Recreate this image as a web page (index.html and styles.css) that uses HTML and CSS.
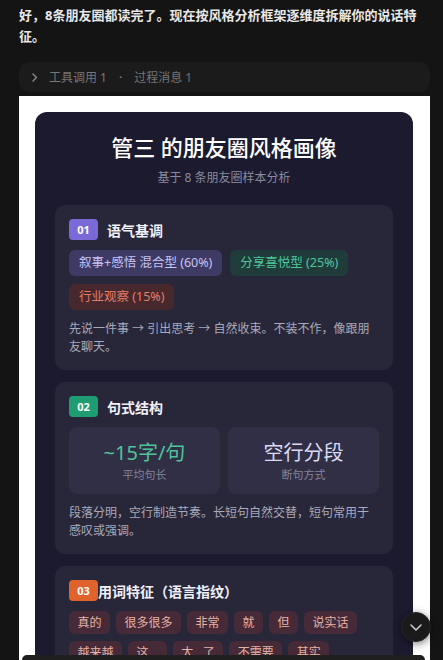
FILE: index.html
```html
<!DOCTYPE html>
<html lang="zh-CN">
<head>
<meta charset="utf-8">
<title>朋友圈风格画像</title>
<link rel="stylesheet" href="styles.css">
</head>
<body>
<div class="chat">
  <p class="intro">好，8条朋友圈都读完了。现在按风格分析框架逐维度拆解你的说话特征。</p>

  <div class="toolbar">
    <svg class="chev" width="6" height="9" viewBox="0 0 6 9"><path d="M1 1l3.5 3.5L1 8" fill="none" stroke="#8a8a8a" stroke-width="1.4" stroke-linecap="round" stroke-linejoin="round"/></svg>
    <span>工具调用 1</span>
    <span class="dot">·</span>
    <span>过程消息 1</span>
  </div>

  <div class="frame">
    <div class="card">
      <h1 class="title">管三 的朋友圈风格画像</h1>
      <p class="subtitle">基于 8 条朋友圈样本分析</p>

      <div class="sections">
        <section class="sec">
          <div class="sec-head">
            <span class="badge badge-purple">01</span>
            <span class="sec-title">语气基调</span>
          </div>
          <div class="tags">
            <span class="tag tag-purple">叙事+感悟 混合型 (60%)</span>
            <span class="tag tag-green">分享喜悦型 (25%)</span>
            <span class="tag tag-red">行业观察 (15%)</span>
          </div>
          <p class="desc">先说一件事 → 引出思考 → 自然收束。不装不作，像跟朋友聊天。</p>
        </section>

        <section class="sec">
          <div class="sec-head">
            <span class="badge badge-green">02</span>
            <span class="sec-title">句式结构</span>
          </div>
          <div class="stats">
            <div class="stat">
              <div class="stat-val stat-green">~15字/句</div>
              <div class="stat-label">平均句长</div>
            </div>
            <div class="stat">
              <div class="stat-val stat-light">空行分段</div>
              <div class="stat-label">断句方式</div>
            </div>
          </div>
          <p class="desc">段落分明，空行制造节奏。长短句自然交替，短句常用于感叹或强调。</p>
        </section>

        <section class="sec">
          <div class="sec-head sec-head-tight">
            <span class="badge badge-orange">03</span>
            <span class="sec-title">用词特征（语言指纹）</span>
          </div>
          <div class="words">
            <span class="word">真的</span>
            <span class="word">很多很多</span>
            <span class="word">非常</span>
            <span class="word">就</span>
            <span class="word">但</span>
            <span class="word">说实话</span>
            <span class="word">越来越</span>
            <span class="word">这...</span>
            <span class="word">太...了</span>
            <span class="word">不需要</span>
            <span class="word">其实</span>
          </div>
          <p class="desc">口语化表达多，常用程度副词加强语气。</p>
        </section>
      </div>
    </div>
  </div>
</div>

<button class="scroll-btn" aria-label="滚动到底部">
  <svg width="12" height="7" viewBox="0 0 12 7"><path d="M1 1l5 5 5-5" fill="none" stroke="#cfcfcf" stroke-width="1.5" stroke-linecap="round" stroke-linejoin="round"/></svg>
</button>
<div class="composer"></div>
</body>
</html>
```

FILE: styles.css
```css
* { box-sizing: border-box; }

html, body {
  margin: 0;
  padding: 0;
  background: #141414;
}

body {
  font-family: "Noto Sans", "Noto Sans CJK SC", sans-serif;
  color: #e6e6e6;
}

.chat {
  padding: 5px 13px 0 19px;
}

.intro {
  margin: 0;
  width: 402px;
  font-size: 13px;
  line-height: 21px;
  font-weight: 700;
  color: #e8e8e8;
}

.toolbar {
  margin-top: 15px;
  height: 30px;
  border-radius: 10px;
  background: #1b1b1b;
  display: flex;
  align-items: center;
  padding-left: 13px;
  font-size: 12px;
  color: #767676;
}

.toolbar .chev {
  margin-right: 11px;
}

.toolbar .dot {
  margin: 0 12px;
  color: #8a8a8a;
}

.frame {
  margin-top: 4px;
  background: #ffffff;
  padding: 16px 17px 16px 16px;
}

.card {
  background: #1c1a2e;
  border-radius: 12px;
  padding: 20px 20px 20px;
}

.title {
  margin: 0;
  text-align: center;
  font-size: 22px;
  line-height: 30px;
  font-weight: 500;
  color: #ffffff;
}

.subtitle {
  margin: 7px 0 0;
  text-align: center;
  font-size: 12px;
  line-height: 18px;
  color: #8b8a9e;
}

.sections {
  margin-top: 18px;
  display: flex;
  flex-direction: column;
  gap: 12px;
}

.sec {
  background: #28273a;
  border-radius: 10px;
  padding: 14px 14px 14px;
}

.sec-head {
  display: flex;
  align-items: center;
  gap: 9px;
  height: 21px;
}

.sec-head-tight { gap: 0; }

.badge {
  width: 29px;
  height: 21px;
  border-radius: 4px;
  display: flex;
  align-items: center;
  justify-content: center;
  font-size: 11px;
  font-weight: 700;
  color: #ffffff;
}

.badge-purple { background: #7a6ad8; }
.badge-green { background: #1f9d72; }
.badge-orange { background: #e0622c; }

.sec-title {
  font-size: 14px;
  font-weight: 700;
  color: #f1f0f7;
}

.tags {
  margin-top: 10px;
  display: flex;
  flex-wrap: wrap;
  gap: 8px;
}

.tag {
  height: 26px;
  line-height: 26px;
  padding: 0 10px;
  border-radius: 6px;
  font-size: 12.5px;
}

.tag-purple { background: #3d3a64; color: #c9c4f4; }
.tag-green { background: #1f3c3b; color: #4fc79a; }
.tag-red { background: #47292d; color: #e67c69; }

.desc {
  margin: 10px 0 0;
  font-size: 12px;
  line-height: 18px;
  color: #aaa9b9;
}

.stats {
  margin-top: 10px;
  display: grid;
  grid-template-columns: 1fr 1fr;
  gap: 8px;
}

.stat {
  background: #302f45;
  border-radius: 8px;
  padding: 13px 8px 12px;
  text-align: center;
}

.stat-val {
  font-size: 20px;
  line-height: 26px;
}

.stat-green { color: #4fc39a; }
.stat-light { color: #dcdaf4; }

.stat-label {
  margin-top: 2px;
  font-size: 11px;
  line-height: 14px;
  color: #85849a;
}

.words {
  margin-top: 10px;
  display: flex;
  flex-wrap: wrap;
  gap: 7px 6px;
}

.word {
  height: 23px;
  line-height: 23px;
  padding: 0 8.5px;
  border-radius: 6px;
  background: #462a37;
  color: #e6b3a6;
  font-size: 12px;
}

.scroll-btn {
  position: fixed;
  right: 12px;
  bottom: 18px;
  width: 30px;
  height: 30px;
  border-radius: 50%;
  border: 1px solid #262626;
  background: #1a1a1a;
  box-shadow: 0 2px 8px rgba(0, 0, 0, 0.5);
  display: flex;
  align-items: center;
  justify-content: center;
  padding: 0;
}

.composer {
  position: fixed;
  left: 22px;
  right: 18px;
  bottom: 0;
  height: 5px;
  background: #1f1f1f;
  border-radius: 14px 14px 0 0;
}
```
